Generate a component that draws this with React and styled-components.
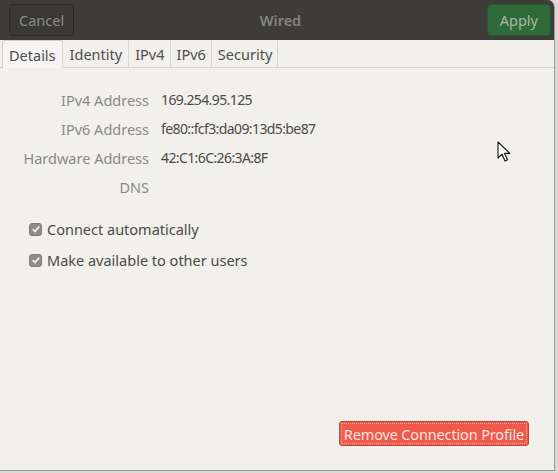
import styled, { createGlobalStyle } from "styled-components";

const Global = createGlobalStyle`
  html, body {
    margin: 0;
    padding: 0;
    background: #d9d9d6;
  }
  body {
    font-family: "Noto Sans", "Open Sans", sans-serif;
    font-size: 14px;
  }
`;

const Window = styled.div`
  width: 554px;
  height: 470px;
  background: #f1f0ec;
  border-right: 1px solid #9a9995;
  border-bottom: 1px solid #9a9995;
  border-top-right-radius: 7px;
  display: flex;
  flex-direction: column;
  overflow: hidden;
  position: relative;
`;

const HeaderBar = styled.div`
  height: 40px;
  box-sizing: border-box;
  background: #3d3c38;
  display: flex;
  align-items: center;
  justify-content: space-between;
  padding: 0 3px 0 9px;
`;

const HeaderButton = styled.button`
  height: 32px;
  padding: 0 ${(p) => (p.$primary ? "12px" : "9px")};
  border-radius: 4px;
  border: 1px solid ${(p) => (p.$primary ? "#245a2d" : "#2b2a27")};
  background: ${(p) => (p.$primary ? "#2e6b38" : "#393834")};
  color: ${(p) => (p.$primary ? "#a9b6a6" : "#8d8c87")};
  font-family: inherit;
  font-size: 14.5px;
  display: flex;
  align-items: center;
`;

const Title = styled.div`
  color: #85847f;
  font-size: 14.5px;
  font-weight: 600;
`;

const TabBar = styled.div`
  height: 27px;
  display: flex;
  align-items: flex-end;
  padding-left: 2px;
  border-bottom: 1px solid #d3d2ce;
`;

const Tab = styled.div`
  box-sizing: border-box;
  padding: 0 ${(p) => p.$pad || 6}px;
  display: flex;
  align-items: center;
  color: #4d4d4b;
  font-size: 14.5px;
  border: 1px solid ${(p) => (p.$active ? "#cfcdc8" : "transparent")};
  border-right: 1px solid #d8d7d2;
  border-bottom: none;
  border-radius: ${(p) => (p.$active ? "3px 3px 0 0" : "0")};
  background: ${(p) => (p.$active ? "#f6f5f3" : "transparent")};
  margin-bottom: ${(p) => (p.$active ? "-1px" : "0")};
  height: ${(p) => (p.$active ? "28px" : "27px")};
`;

const Content = styled.div`
  flex: 1;
  display: flex;
  flex-direction: column;
  padding: 22px 0 0 0;
`;

const InfoGrid = styled.div`
  display: grid;
  grid-template-columns: 149px auto;
  column-gap: 12px;
  row-gap: 9px;
  align-items: center;
`;

const Label = styled.div`
  text-align: right;
  color: #8a8986;
  font-size: 14.5px;
  height: 20px;
  line-height: 20px;
`;

const Value = styled.div`
  color: #4a4a48;
  font-size: 14px;
  letter-spacing: -0.6px;
  height: 20px;
  line-height: 20px;
`;

const Checks = styled.div`
  display: flex;
  flex-direction: column;
  gap: 11px;
  padding: 22px 0 0 29px;
`;

const CheckRow = styled.label`
  display: flex;
  align-items: center;
  gap: 5px;
  color: #4a4a48;
  font-size: 14.5px;
  height: 20px;
`;

const Box = styled.span`
  width: 13px;
  height: 13px;
  box-sizing: border-box;
  border-radius: 3px;
  border: 1px solid #7d7c79;
  background: #8e8d8a;
  display: flex;
  align-items: center;
  justify-content: center;
`;

const Footer = styled.div`
  margin-top: auto;
  display: flex;
  justify-content: flex-end;
  padding: 0 25px 24px 0;
`;

const DangerButton = styled.button`
  height: 25px;
  padding: 0 4px;
  border-radius: 3px;
  border: 1px solid #c7483b;
  outline: 1px dotted #f5a59b;
  outline-offset: -3px;
  background: #ef5a4b;
  color: #fde4e0;
  font-family: inherit;
  font-size: 14.5px;
  letter-spacing: -0.15px;
`;

const Cursor = styled.svg`
  position: absolute;
  left: 497px;
  top: 141px;
`;

const Check = () => (
  <Box>
    <svg width="10" height="10" viewBox="0 0 10 10">
      <path d="M1.8 5.2 L4 7.4 L8.3 2.5" fill="none" stroke="#f2f1ee" strokeWidth="1.7" />
    </svg>
  </Box>
);

const rows = [
  ["IPv4 Address", "169.254.95.125"],
  ["IPv6 Address", "fe80::fcf3:da09:13d5:be87"],
  ["Hardware Address", "42:C1:6C:26:3A:8F"],
  ["DNS", ""],
];

export default function App() {
  return (
    <>
      <Global />
      <Window>
        <HeaderBar>
          <HeaderButton>Cancel</HeaderButton>
          <Title>Wired</Title>
          <HeaderButton $primary>Apply</HeaderButton>
        </HeaderBar>
        <TabBar>
          <Tab $active>Details</Tab>
          <Tab>Identity</Tab>
          <Tab $pad={5}>IPv4</Tab>
          <Tab $pad={5}>IPv6</Tab>
          <Tab $pad={5}>Security</Tab>
        </TabBar>
        <Content>
          <InfoGrid>
            {rows.map(([k, v]) => (
              <>
                <Label key={k}>{k}</Label>
                <Value key={k + "v"}>{v}</Value>
              </>
            ))}
          </InfoGrid>
          <Checks>
            <CheckRow>
              <Check />
              Connect automatically
            </CheckRow>
            <CheckRow>
              <Check />
              Make available to other users
            </CheckRow>
          </Checks>
          <Footer>
            <DangerButton>Remove Connection Profile</DangerButton>
          </Footer>
        </Content>
        <Cursor width="14" height="22" viewBox="0 0 14 22">
          <path
            d="M1 1 L1 17 L5 13.2 L8 20 L10.5 18.8 L7.6 12.4 L12.8 12.4 Z"
            fill="#fff"
            stroke="#111"
            strokeWidth="1.1"
            strokeLinejoin="round"
          />
        </Cursor>
      </Window>
    </>
  );
}
